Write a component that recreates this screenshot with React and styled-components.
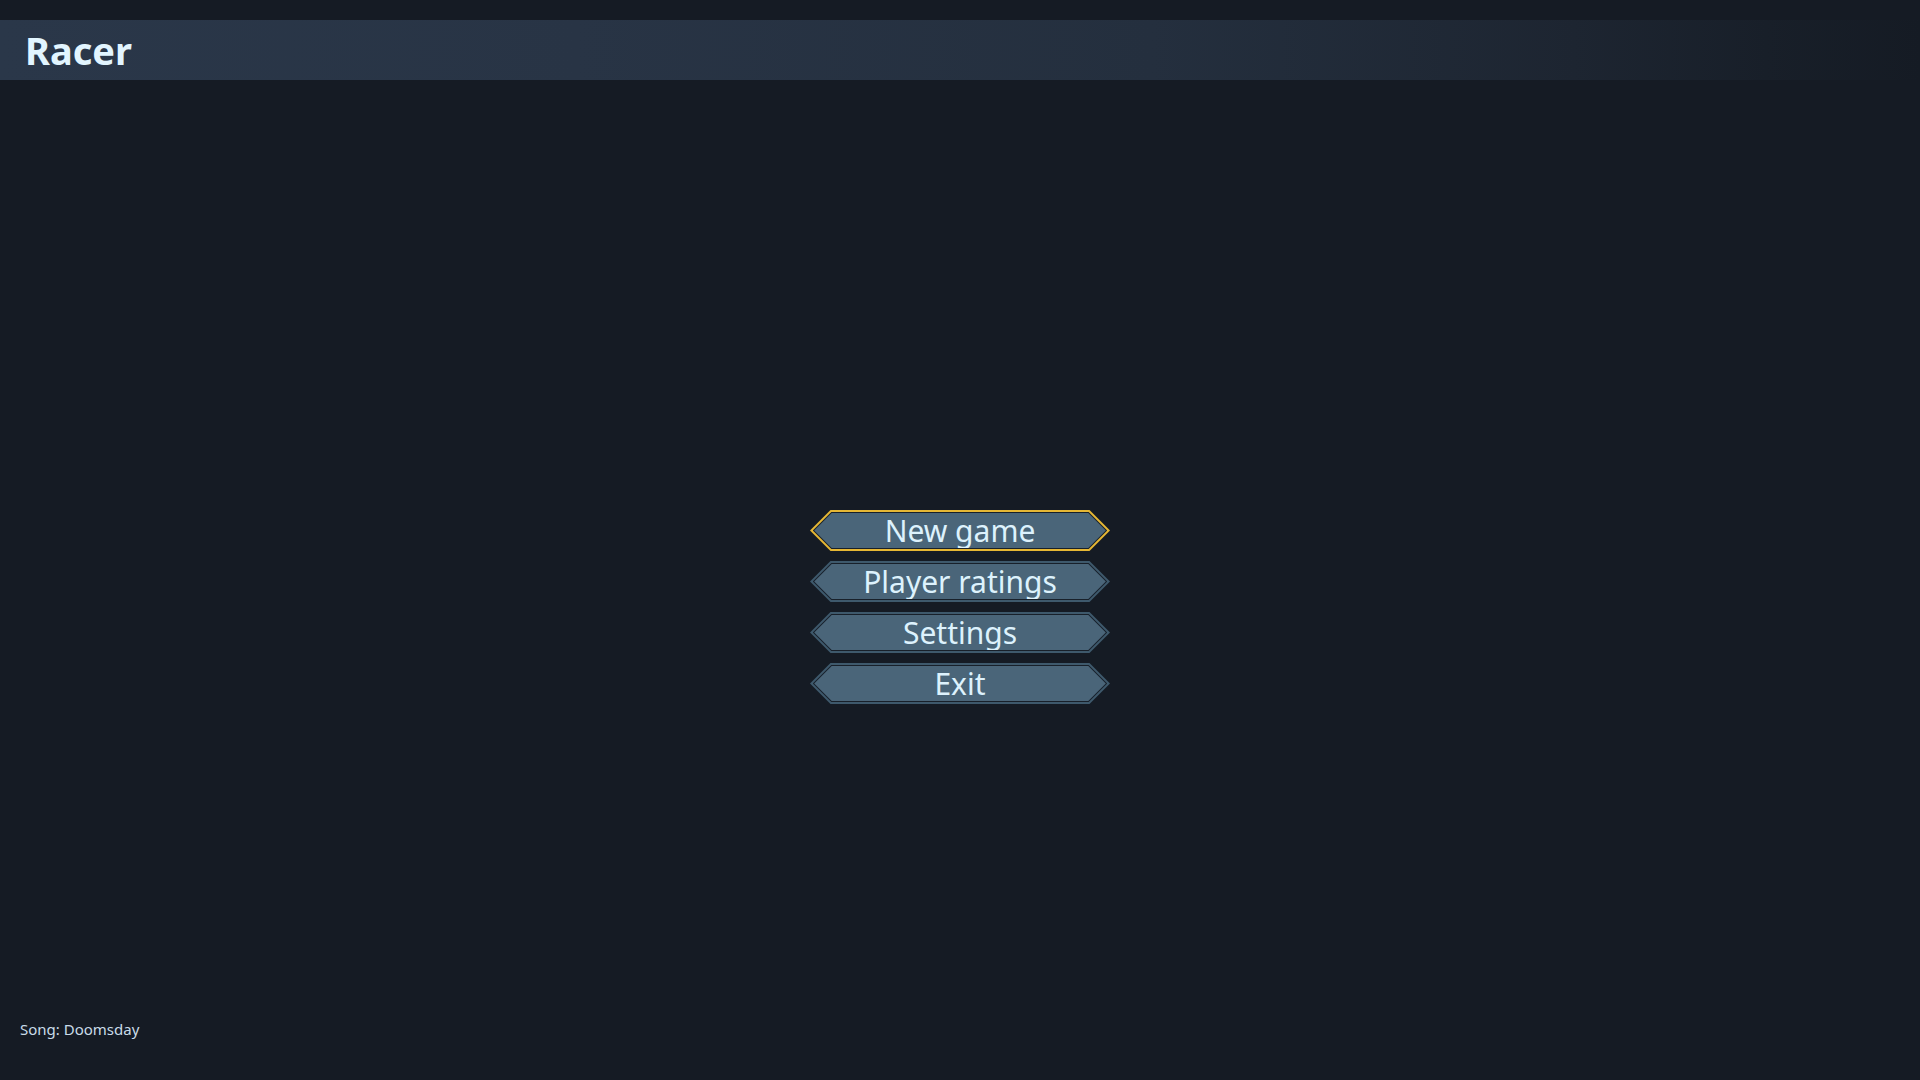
import React from 'react';
import styled, { createGlobalStyle } from 'styled-components';

const menuItems = ['New game', 'Player ratings', 'Settings', 'Exit'];

const App = () => {
  return (
    <Page>
      <GlobalStyle />
      <Header>
        <Title>Racer</Title>
      </Header>
      <Main>
        <Menu>
          {menuItems.map((label, i) => (
            <MenuButton key={label} focused={i === 0}>
              <ButtonGap>
                <ButtonFill>{label}</ButtonFill>
              </ButtonGap>
            </MenuButton>
          ))}
        </Menu>
      </Main>
      <Footer>Song: Doomsday</Footer>
    </Page>
  );
};

export default App;

const GlobalStyle = createGlobalStyle`
  html, body {
    margin: 0;
    padding: 0;
    background: #151b24;
  }
  * {
    box-sizing: border-box;
  }
`;

const Page = styled.div`
  width: 100%;
  height: 100vh;
  display: flex;
  flex-direction: column;
  font-family: 'Noto Sans', 'Open Sans', sans-serif;
  background: #151b24;
  overflow: hidden;
`;

const Header = styled.div`
  margin-top: 20px;
  height: 60px;
  display: flex;
  align-items: center;
  padding-left: 25px;
  background: linear-gradient(
    90deg,
    #2a3749 0%,
    #283445 30%,
    #242f3e 60%,
    #1d2531 82%,
    #181f29 92%,
    #151b24 100%
  );
`;

const Title = styled.h1`
  margin: 0;
  font-size: 38px;
  font-weight: 700;
  color: #e2f5ff;
  line-height: 1;
`;

const Main = styled.div`
  flex: 1;
  display: flex;
  justify-content: center;
  padding-top: 430px;
`;

const Menu = styled.div`
  display: flex;
  flex-direction: column;
  gap: 10px;
`;

const MenuButton = styled.div`
  width: 300px;
  height: 41px;
  padding: 2px 2.8px;
  background: ${({ focused }) => (focused ? '#e6b734' : '#3e596c')};
  clip-path: polygon(
    20.5px 0,
    calc(100% - 20.5px) 0,
    100% 50%,
    calc(100% - 20.5px) 100%,
    20.5px 100%,
    0 50%
  );
  cursor: pointer;
`;

const ButtonGap = styled.div`
  height: 100%;
  padding: 1px 1.4px;
  background: #18202a;
  clip-path: polygon(
    18.5px 0,
    calc(100% - 18.5px) 0,
    100% 50%,
    calc(100% - 18.5px) 100%,
    18.5px 100%,
    0 50%
  );
`;

const ButtonFill = styled.div`
  height: 100%;
  display: flex;
  align-items: center;
  justify-content: center;
  background: #4a6579;
  clip-path: polygon(
    17.5px 0,
    calc(100% - 17.5px) 0,
    100% 50%,
    calc(100% - 17.5px) 100%,
    17.5px 100%,
    0 50%
  );
  font-size: 30px;
  color: #ddf2fd;
  line-height: 1;
  padding-top: 1px;
`;

const Footer = styled.div`
  padding: 0 0 41px 20px;
  font-size: 15px;
  color: #c9dbe8;
`;
